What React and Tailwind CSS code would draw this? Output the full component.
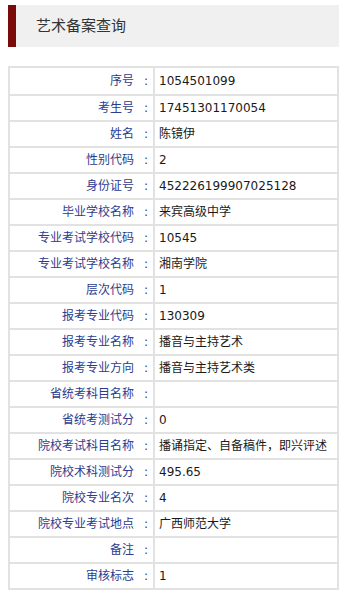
const rows = [
  ['序号', '1054501099'],
  ['考生号', '17451301170054'],
  ['姓名', '陈镜伊'],
  ['性别代码', '2'],
  ['身份证号', '452226199907025128'],
  ['毕业学校名称', '来宾高级中学'],
  ['专业考试学校代码', '10545'],
  ['专业考试学校名称', '湘南学院'],
  ['层次代码', '1'],
  ['报考专业代码', '130309'],
  ['报考专业名称', '播音与主持艺术'],
  ['报考专业方向', '播音与主持艺术类'],
  ['省统考科目名称', ''],
  ['省统考测试分', '0'],
  ['院校考试科目名称', '播诵指定、自备稿件，即兴评述'],
  ['院校术科测试分', '495.65'],
  ['院校专业名次', '4'],
  ['院校专业考试地点', '广西师范大学'],
  ['备注', ''],
  ['审核标志', '1'],
]

export default function App() {
  return (
    <div className="min-h-screen bg-white pt-[5px] font-['Tahoma','DejaVu_Sans','Noto_Sans_CJK_SC',sans-serif]">
      {/* Title bar */}
      <div className="ml-2 flex h-[42px] items-center border-l-[8px] border-[#7b0a0a] bg-[#f0f0f0]">
        <h1 className="pl-5 text-[15px] text-[#333]">艺术备案查询</h1>
      </div>

      {/* Record table */}
      <div className="ml-2 mt-[19px] w-[331px] border-2 border-[#e2e2e2]">
        {rows.map(([label, value], i) => (
          <div
            key={label}
            className={`flex h-[26px] text-[12px] ${i > 0 ? 'border-t-2 border-[#e2e2e2]' : ''}`}
          >
            <div className="flex w-[145px] shrink-0 items-center justify-end border-r-2 border-[#e2e2e2] text-[#2d3b8e]">
              <span>{label}</span>
              <span className="ml-[10px] mr-[5px]">:</span>
            </div>
            <div className="flex items-center pl-[4px] text-[#1a1a1a] whitespace-nowrap">{value}</div>
          </div>
        ))}
      </div>
    </div>
  )
}
